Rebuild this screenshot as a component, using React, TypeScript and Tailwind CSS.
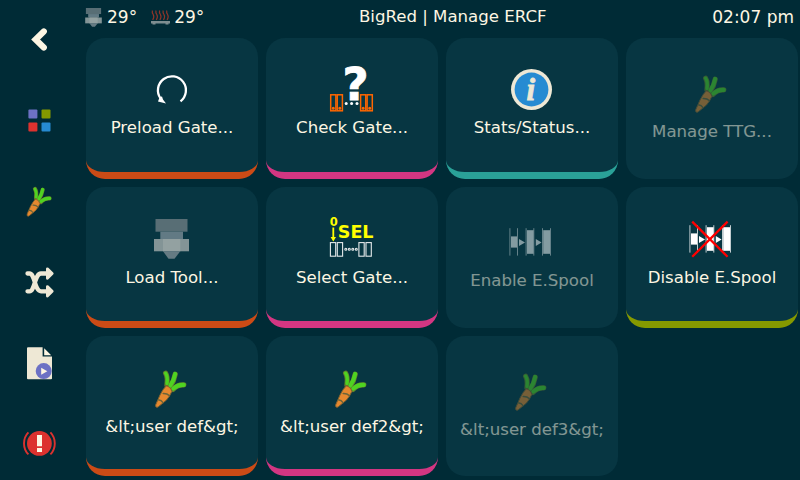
import type { ReactNode } from "react";

function CarrotShape() {
  return (
    <g strokeLinecap="round" strokeLinejoin="round">
      <g fill="none" stroke="#627b2c" strokeWidth="5.2">
        <path d="M25.6 14.2Q28 18 26.9 26" />
        <path d="M35.2 15.2Q34 22 30.2 27.5" />
        <path d="M43.8 25.9Q37 25.5 32.8 30.6" />
      </g>
      <g fill="none" stroke="#4fd321" strokeWidth="3.4">
        <path d="M25.6 14.2Q28 18 27 24.5" />
        <path d="M35.2 14.9Q34 21 30.4 26.5" strokeWidth="4.1" />
        <path d="M43.8 25.9Q38 25.4 33.4 29.6" strokeWidth="4.1" />
      </g>
      <path d="M26.2 26.8Q30.5 27.5 31.8 32.5Q30 37 26.5 41L18 48Q15 49 15.8 45.6L20 36Q23 30 26.2 26.8Z" fill="#e5882f" stroke="#81632f" strokeWidth="1" />
      <path d="M23.2 34.5Q27 34.3 29.2 36.6M18.8 41Q21 40.8 23 43.6" fill="none" stroke="#69643a" strokeWidth="1.5" />
    </g>
  );
}

function ExtruderShape() {
  return (
    <g>
      <rect x="15.5" y="9" width="32" height="12.7" fill="#586e75" />
      <rect x="20.3" y="21.7" width="22.7" height="7.3" fill="#627a84" />
      <rect x="14" y="29" width="35" height="12.3" fill="#839496" />
      <rect x="23" y="29" width="17.3" height="12.3" fill="#93a1a1" />
      <path d="M23 41.3H40.3L34.5 48.7H28.5Z" fill="#657b83" />
    </g>
  );
}

function IconBox({ children }: { children: ReactNode }) {
  return (
    <svg viewBox="0 0 64 60" className="h-[60px] w-16 shrink-0 overflow-visible">
      {children}
    </svg>
  );
}

const Carrot = () => <IconBox><CarrotShape /></IconBox>;
const Extruder = () => <IconBox><ExtruderShape /></IconBox>;

const Preload = () => (
  <IconBox>
    <path d="M40.5 41.4A14 14 0 1 0 20.5 38.4" fill="none" stroke="#fff" strokeWidth="2.3" />
    <path d="M26 43.6L18 41.4L19.2 38.2L19.6 37L22 36.6L23 39.4Z" fill="#fff" />
  </IconBox>
);

const CheckGate = () => (
  <IconBox>
    <text x="22.4" y="39.8" fontSize="45" fontWeight="700" fill="#fff" stroke="#fff" strokeWidth="0.8">?</text>
    <g fill="none" stroke="#ff6600" strokeWidth="1.5">
      {[10.7, 17.2, 40.6, 47.1].map((x) => (
        <g key={x}>
          <rect x={x} y="34.8" width="5.2" height="16" />
          <circle cx={x + 2.6} cy="48.2" r="0.8" fill="#ff6600" />
        </g>
      ))}
    </g>
    {[26.2, 31.6, 37].map((x) => (
      <circle key={x} cx={x} cy="43.6" r="1.5" fill="#fff" />
    ))}
  </IconBox>
);

const Info = () => (
  <IconBox>
    <circle cx="31.5" cy="29.5" r="20.5" fill="#eee8d5" />
    <circle cx="31.5" cy="29.5" r="16.9" fill="#268bd2" />
    <text x="26.4" y="39.6" fontSize="31" fontWeight="700" fontStyle="italic" fill="#eee8d5" stroke="#eee8d5" strokeWidth="0.8" className="font-['Liberation_Serif',serif]">i</text>
  </IconBox>
);

const SelectGate = () => (
  <IconBox>
    <g fill="#ff0">
      <text x="9.8" y="16" fontSize="11.5" fontWeight="700">0</text>
      <text x="17.8" y="28.2" fontSize="17.5" fontWeight="700">SEL</text>
      <path d="M12.4 17.5H14.2V27H16L13.3 31.5L10.6 27H12.4Z" />
    </g>
    <g fill="none" stroke="#e6eaeb" strokeWidth="1.1">
      {[10.4, 17.3, 38.9, 46].map((x) => (
        <rect key={x} x={x} y="32.6" width="5.3" height="13.6" />
      ))}
      {[25.8, 29.3, 32.8, 36.3].map((x) => (
        <circle key={x} cx={x} cy="39.3" r="1" />
      ))}
    </g>
  </IconBox>
);

function SpoolShape() {
  return (
    <g fill="#fff">
      <rect x="11" y="23.4" width="6" height="11.2" />
      <rect x="27" y="17.2" width="6.6" height="23.6" />
      <rect x="43.2" y="17.2" width="6.8" height="23.6" />
      <path d="M19 26V33L25 29.5ZM35.8 26V33L41.6 29.5Z" />
      {[9.4, 17, 25.6, 33.3, 42, 50].map((x) => (
        <rect key={x} x={x} y="15.2" width="1" height="27.4" fillOpacity=".75" />
      ))}
    </g>
  );
}

const Spool = () => <IconBox><SpoolShape /></IconBox>;
const SpoolOff = () => (
  <IconBox>
    <SpoolShape />
    <path d="M12.2 11.6L47.6 46.8M47.6 11.6L12.2 46.8" stroke="#f00" strokeWidth="2.3" />
  </IconBox>
);

type Action = { label: string; icon: ReactNode; border?: string };

const actions: Action[] = [
  { label: "Preload Gate...", icon: <Preload />, border: "border-[#cb4b16]" },
  { label: "Check Gate...", icon: <CheckGate />, border: "border-[#d33682]" },
  { label: "Stats/Status...", icon: <Info />, border: "border-[#2aa198]" },
  { label: "Manage TTG...", icon: <Carrot /> },
  { label: "Load Tool...", icon: <Extruder />, border: "border-[#cb4b16]" },
  { label: "Select Gate...", icon: <SelectGate />, border: "border-[#d33682]" },
  { label: "Enable E.Spool", icon: <Spool /> },
  { label: "Disable E.Spool", icon: <SpoolOff />, border: "border-[#859900]" },
  { label: "&lt;user def&gt;", icon: <Carrot />, border: "border-[#cb4b16]" },
  { label: "&lt;user def2&gt;", icon: <Carrot />, border: "border-[#d33682]" },
  { label: "&lt;user def3&gt;", icon: <Carrot /> },
];

// Bottom padding of the cards in each row of the grid.
const rowPadding = ["pb-3", "pb-[10.5px]", "pb-2.5"];

function ActionCard({ label, icon, border, padding }: Action & { padding: string }) {
  return (
    <button
      disabled={!border}
      className={`flex min-h-0 flex-col items-center justify-center rounded-[19px] bg-[#073642] ${padding} ${border ? `border-b-[7px] ${border}` : ""}`}
    >
      <span className={`flex flex-col items-center ${border ? "" : "opacity-50"}`}>
        {icon}
        <span className="-mt-0.5 leading-5 whitespace-nowrap">{label}</span>
      </span>
    </button>
  );
}

const navigation: { name: string; view: string; art: ReactNode }[] = [
  {
    name: "Back",
    view: "0 0 80 80",
    art: <path d="M43.8 31.5L35.6 39.5L43.8 47.5" fill="none" stroke="#fdf6e3" strokeWidth="6.2" strokeLinecap="round" />,
  },
  {
    name: "Home",
    view: "0 80 80 80",
    art: (
      <g>
        <rect x="28.4" y="109.4" width="9" height="9" rx="1" fill="#6c71c4" />
        <rect x="41.5" y="109.4" width="9" height="9" rx="1" fill="#859900" />
        <rect x="28.4" y="122.6" width="9" height="9" rx="1" fill="#dc322f" />
        <rect x="41.5" y="122.6" width="9" height="9" rx="1" fill="#268bd2" />
      </g>
    ),
  },
  {
    name: "ERCF",
    view: "0 160 80 80",
    art: <g transform="translate(14.5 177.6) scale(.8)"><CarrotShape /></g>,
  },
  {
    name: "Shuffle",
    view: "0 240 80 80",
    art: (
      <g fill="none" stroke="#eee8d5" strokeWidth="4.3" strokeLinecap="round" strokeLinejoin="round">
        <path d="M27.5 273.5H29.5C35 273.5 34.5 291.3 41 291.3H49M27.5 291.3H29.5C35 291.3 34.5 273.5 41 273.5H49" />
        <path d="M47.4 268.8L52.2 273.5L47.4 278.2ZM47.4 286.6L52.2 291.3L47.4 296Z" fill="#eee8d5" strokeWidth="2.8" />
      </g>
    ),
  },
  {
    name: "Print",
    view: "0 320 80 80",
    art: (
      <g>
        <path d="M28 347.3H42.6V356.6H52V378.4Q52 379.2 51 379.2H28Q27 379.2 27 378.2V348.3Q27 347.3 28 347.3Z" fill="#eee8d5" />
        <path d="M44.2 348.2L51.2 355.2H44.2Z" fill="#fdf6e3" />
        <circle cx="43.7" cy="371.1" r="8" fill="#6c71c4" />
        <path d="M41.2 367.7V374.7L47.3 371.2Z" fill="#fdf6e3" />
      </g>
    ),
  },
  {
    name: "Emergency stop",
    view: "0 400 80 80",
    art: (
      <g>
        <circle cx="39.4" cy="443.4" r="12.4" fill="#dc322f" />
        <path d="M28.4 432.4Q24 437 24 443.4T28.4 454.4M50.4 432.4Q54.8 437 54.8 443.4T50.4 454.4" fill="none" stroke="#dc322f" strokeWidth="1.9" />
        <path d="M37 435H42V446.2H37ZM37 448H42V452H37Z" fill="#fdf6e3" />
      </g>
    ),
  },
];

export default function App() {
  return (
    <div className="flex h-[480px] w-[800px] overflow-hidden bg-[#002b36] font-['DejaVu_Sans',sans-serif] text-[16.6px] text-[#fdf6e3]">
      <nav className="flex w-20 shrink-0 flex-col">
        {navigation.map(({ name, view, art }) => (
          <button key={name} aria-label={name} className="size-20">
            <svg viewBox={view} className="size-20 overflow-visible">{art}</svg>
          </button>
        ))}
      </nav>
      <main className="flex min-w-0 flex-1 flex-col pr-0.5 pb-1 pl-1.5">
        <header className="flex h-[38px] shrink-0 items-center pr-1 pb-1 leading-5">
          <div className="flex items-center text-[17px]">
            <svg viewBox="14 9 35 40" className="mr-[5px] -ml-px h-[19px] w-[17px]"><ExtruderShape /></svg>
            <span>29°</span>
            <svg viewBox="0 0 19 15" className="mr-1 ml-3.5 h-[15px] w-[19px]">
              <g fill="none" stroke="#8f3529" strokeWidth="1.2">
                {[2.2, 5.8, 9.4, 13, 16.6].map((x) => (
                  <path key={x} d={`M${x - 0.8} 0.5Q${x - 1.4} 2.5 ${x} 4.5T${x - 0.5} 10`} />
                ))}
              </g>
              <path d="M0 11H19V13.5H17.5V14.5H14.5V13.5H4.5V14.5H1.5V13.5H0Z" fill="#7d8d90" />
            </svg>
            <span>29°</span>
          </div>
          <h1 className="flex-1 pr-[11px] text-center">BigRed | Manage ERCF</h1>
          <time className="text-[17px]">02:07 pm</time>
        </header>
        <section className="grid grid-cols-4 grid-rows-[141px_141px_140px] gap-2">
          {actions.map((action, index) => (
            <ActionCard key={action.label} {...action} padding={rowPadding[Math.floor(index / 4)]} />
          ))}
        </section>
      </main>
    </div>
  );
}
